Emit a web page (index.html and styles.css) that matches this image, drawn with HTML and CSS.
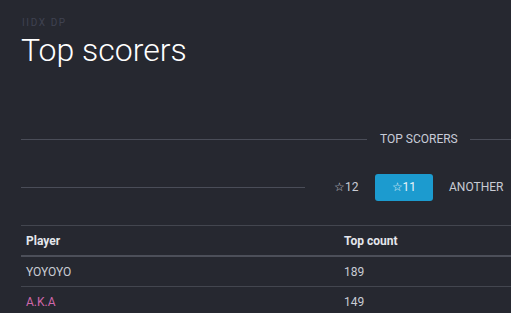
FILE: index.html
```html
<!DOCTYPE html>
<html lang="en">
<head>
    <meta charset="UTF-8">
    <meta name="viewport" content="width=device-width, initial-scale=1.0">
    <title>Top scorers</title>
    <link rel="stylesheet" href="styles.css">
</head>
<body>
    <div class="page">
        <div class="overline">IIDX DP</div>
        <h1 class="title">Top scorers</h1>

        <div class="divider-row">
            <span class="line line-left"></span>
            <span class="divider-text">TOP SCORERS</span>
            <span class="line"></span>
        </div>

        <div class="tab-row">
            <span class="line line-tabs"></span>
            <div class="tabs">
                <button class="tab">☆12</button>
                <button class="tab active">☆11</button>
                <button class="tab">ANOTHER</button>
            </div>
        </div>

        <table class="scores">
            <thead>
                <tr>
                    <th class="col-player">Player</th>
                    <th>Top count</th>
                </tr>
            </thead>
            <tbody>
                <tr>
                    <td>YOYOYO</td>
                    <td>189</td>
                </tr>
                <tr>
                    <td class="pink">A.K.A</td>
                    <td>149</td>
                </tr>
            </tbody>
        </table>
    </div>
</body>
</html>
```

FILE: styles.css
```css
body {
    margin: 0;
    background-color: #262830;
    font-family: Roboto, "Liberation Sans", sans-serif;
    color: #c9ccd4;
    overflow: hidden;
}
.page {
    width: 490px;
    padding: 16px 0 0 21px;
}
.overline {
    font-size: 10px;
    letter-spacing: 1.6px;
    color: #3f4250;
    padding-left: 1px;
    line-height: 14px;
}
.title {
    margin: 0;
    font-size: 32px;
    font-weight: 300;
    color: #ffffff;
    line-height: 40px;
}
.divider-row {
    display: flex;
    align-items: center;
    margin-top: 57px;
    height: 24px;
}
.line {
    flex: 1;
    height: 1px;
    background: #4a4d58;
}
.line-left {
    flex: 0 0 346px;
}
.divider-text {
    font-size: 12px;
    color: #c8ccd8;
    margin: 0 12px 0 13px;
    white-space: nowrap;
}
.tab-row {
    display: flex;
    align-items: center;
    margin-top: 22px;
    height: 28px;
}
.line-tabs {
    flex: 0 0 284px;
}
.tabs {
    display: flex;
    margin-left: 13px;
}
.tab {
    font-family: Roboto, "Liberation Sans", sans-serif;
    font-size: 12px;
    color: #c9ccd4;
    background: none;
    border: none;
    border-radius: 3px;
    padding: 0 16px;
    height: 27px;
    white-space: nowrap;
}
.tab.active {
    background: #1c9bcf;
    color: #e8f4fa;
    padding: 0 17px;
}
.scores {
    margin-top: 24px;
    width: 490px;
    border-collapse: collapse;
    font-size: 12px;
    border-top: 1px solid #43464f;
}
.scores th {
    text-align: left;
    font-weight: bold;
    color: #e4e6ec;
    height: 29px;
    padding: 0 5px;
    border-bottom: 2px solid #4c4f59;
}
.scores .col-player {
    width: 308px;
}
.scores td {
    height: 29px;
    padding: 0 5px;
    border-bottom: 1px solid #43464f;
}
.pink {
    color: #cf67aa;
}
```
